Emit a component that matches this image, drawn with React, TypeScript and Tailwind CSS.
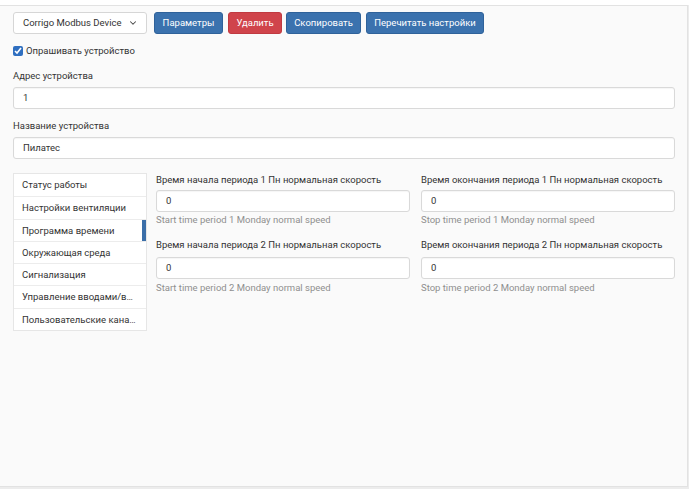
import { ChevronDown } from "lucide-react";

const tabs = [
  "Статус работы",
  "Настройки вентиляции",
  "Программа времени",
  "Окружающая среда",
  "Сигнализация",
  "Управление вводами/выводами",
  "Пользовательские каналы",
];

const fields = [
  [
    { label: "Время начала периода 1 Пн нормальная скорость", help: "Start time period 1 Monday normal speed" },
    { label: "Время начала периода 2 Пн нормальная скорость", help: "Start time period 2 Monday normal speed" },
  ],
  [
    { label: "Время окончания периода 1 Пн нормальная скорость", help: "Stop time period 1 Monday normal speed" },
    { label: "Время окончания периода 2 Пн нормальная скорость", help: "Stop time period 2 Monday normal speed" },
  ],
];

const Input = ({ value }: { value: string }) => (
  <div className="h-[22px] border border-[#d9d9d9] rounded-[3px] bg-white px-[9px] flex items-center shadow-[inset_0_1px_1px_rgba(0,0,0,0.04)]">
    {value}
  </div>
);

export default function App() {
  return (
    <div className="w-[689px] h-[489px] bg-[#ececec] overflow-hidden text-[9.5px] text-[#333] font-['Roboto',sans-serif]">
      <div className="h-[5px] bg-white" />
      <div className="h-[482px] w-[688px] bg-[#fafafa] border-t border-r border-b border-[#e2e2e2] pl-[13px] pr-[12px] pt-[6px]">
        {/* Toolbar */}
        <div className="flex items-center h-[22px]">
          <div className="w-[134px] h-[22px] border border-[#d6d6d6] rounded-[3px] bg-white flex items-center justify-between pl-[9px] pr-[8px]">
            <span>Corrigo Modbus Device</span>
            <ChevronDown size={10} strokeWidth={2.5} className="text-[#444]" />
          </div>
          <button className="ml-[7px] w-[69px] h-[22px] rounded-[3px] bg-[#3b72ae] border border-[#2f629a] text-white">Параметры</button>
          <button className="ml-[5px] w-[54px] h-[22px] rounded-[3px] bg-[#d0444b] border border-[#c03a41] text-white">Удалить</button>
          <button className="ml-[4px] w-[75px] h-[22px] rounded-[3px] bg-[#3b72ae] border border-[#2f629a] text-white">Скопировать</button>
          <button className="ml-[5px] w-[118px] h-[22px] rounded-[3px] bg-[#3b72ae] border border-[#2f629a] text-white">Перечитать настройки</button>
        </div>

        {/* Poll checkbox */}
        <label className="mt-[10px] h-[14px] flex items-center gap-[3px]">
          <input type="checkbox" defaultChecked className="w-[10px] h-[10px] m-0 accent-[#2f6fc0]" />
          <span>Опрашивать устройство</span>
        </label>

        <div className="mt-[11px] h-[14px] leading-[14px]">Адрес устройства</div>
        <div className="mt-[4px]">
          <Input value="1" />
        </div>

        <div className="mt-[10px] h-[14px] leading-[14px]">Название устройства</div>
        <div className="mt-[4px]">
          <Input value="Пилатес" />
        </div>

        {/* Tabs + content */}
        <div className="mt-[14px] flex items-start">
          <div className="w-[134px] border border-[#e6e6e6] bg-white">
            {tabs.map((t, i) => (
              <div
                key={t}
                className={`relative h-[22.3px] leading-[22px] pl-[8px] pr-[6px] truncate ${i > 0 ? "border-t border-[#ececec]" : ""}`}
              >
                {t}
                {i === 2 && <div className="absolute right-[0px] top-0 w-[4px] h-full bg-[#3b6ea8]" />}
              </div>
            ))}
          </div>
          <div className="ml-[9px] flex-1 grid grid-cols-2 gap-x-[11px]">
            {fields.map((col, ci) => (
              <div key={ci} className="flex flex-col">
                {col.map((f, fi) => (
                  <div key={fi} className={fi > 0 ? "mt-[11px]" : ""}>
                    <div className="h-[14px] leading-[14px] whitespace-nowrap">{f.label}</div>
                    <div className={fi > 0 ? "mt-[5px]" : "mt-[3px]"}>
                      <Input value="0" />
                    </div>
                    <div className={`${fi > 0 ? "mt-[2px]" : "mt-[1px]"} h-[14px] leading-[14px] text-[#8f8f8f]`}>{f.help}</div>
                  </div>
                ))}
              </div>
            ))}
          </div>
        </div>
      </div>
    </div>
  );
}
